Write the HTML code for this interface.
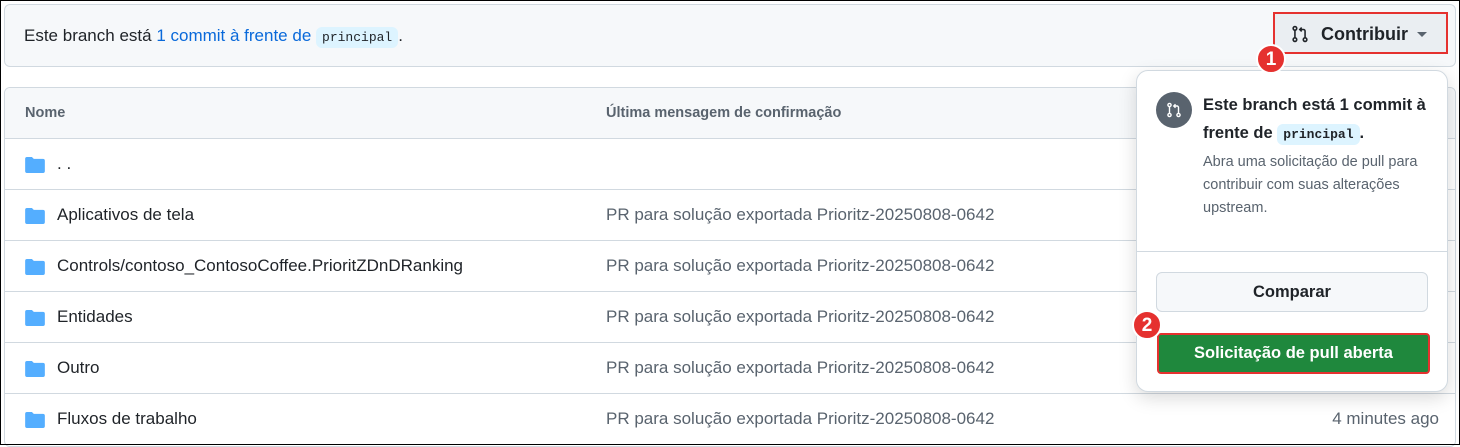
<!DOCTYPE html>
<html><head><meta charset="utf-8"><style>
*{box-sizing:border-box;margin:0;padding:0}
body{width:1460px;height:445px;background:#fff;font-family:"Liberation Sans",sans-serif;position:relative;overflow:hidden;color:#1f2328}
.frame{position:absolute;left:0;top:0;width:1460px;height:445px;border:1px solid #000;z-index:10;pointer-events:none}
.banner{position:absolute;left:4px;top:4px;width:1452px;height:63px;background:#f6f8fa;border:1px solid #d1d9e0;border-radius:6px}
.banner .t{position:absolute;left:19px;top:21px;font-size:17px}
a{color:#0969da;text-decoration:none}
code{font-family:"Liberation Mono",monospace;font-size:13px;background:#ddf4ff;border-radius:6px;padding:3px 6px;color:#1f2328}
.cbtn{position:absolute;left:1273px;top:12px;width:175px;height:42px;background:#eaeef2;border:2px solid #e5312f;font-size:18px;font-weight:bold}
.tbl{position:absolute;left:4px;top:87px;width:1452px;height:360px;border:1px solid #d1d9e0;border-radius:6px;overflow:hidden}
.hdr{height:51px;background:#f6f8fa;border-bottom:1px solid #d1d9e0;font-size:14.5px;font-weight:bold;color:#59636e;position:relative}
.row{height:51px;border-bottom:1px solid #d1d9e0;position:relative;font-size:17px}
.row .n{position:absolute;left:52px;top:15px}
.row .m{position:absolute;left:601px;top:15px;color:#59636e}
.row .d{position:absolute;right:16px;top:15px;color:#59636e}
.fold{position:absolute;left:20px;top:18px;width:20px;height:16px}
.pop{position:absolute;left:1136px;top:70px;width:312px;height:322px;background:#fff;border:1px solid #d1d9e0;border-radius:12px;box-shadow:0 6px 18px rgba(0,0,0,.15)}
.badge{position:absolute;width:30px;height:30px;border-radius:50%;background:#e5312f;color:#fff;font-weight:bold;font-size:19px;text-align:center;line-height:27px;border:2px solid #fff}
</style></head><body>
<div class="frame"></div>
<div class="banner"><div class="t">Este branch está <a>1 commit à frente de</a> <code>principal</code>.</div></div>
<div class="cbtn">
<svg style="position:absolute;left:16px;top:11px" width="18" height="18" viewBox="0 0 16 16" fill="none" stroke="#1f2328" stroke-width="1.4"><circle cx="3.5" cy="3" r="1.6"/><circle cx="3.5" cy="13" r="1.6"/><circle cx="12.5" cy="13" r="1.6"/><path d="M3.5 4.6v6.8M12.5 11.4V5.5a1.5 1.5 0 0 0-1.5-1.5H8M9.5 2.3 7.8 4l1.7 1.7"/></svg>
<span style="position:absolute;left:46px;top:10px">Contribuir</span>
<span style="position:absolute;left:142px;top:18px;border-left:5px solid transparent;border-right:5px solid transparent;border-top:5px solid #59636e"></span>
</div>
<div class="tbl">
<div class="hdr"><span style="position:absolute;left:20px;top:17px">Nome</span><span style="position:absolute;left:601px;top:17px">Última mensagem de confirmação</span></div>
<div class="row"><svg class="fold" viewBox="0 0 16 13"><path d="M0 1.5A1.5 1.5 0 0 1 1.5 0h4l1.5 1.5h7.5A1.5 1.5 0 0 1 16 3v8.5a1.5 1.5 0 0 1-1.5 1.5h-13A1.5 1.5 0 0 1 0 11.5z" fill="#54aeff"/></svg><span class="n">. .</span></div>
<div class="row"><svg class="fold" viewBox="0 0 16 13"><path d="M0 1.5A1.5 1.5 0 0 1 1.5 0h4l1.5 1.5h7.5A1.5 1.5 0 0 1 16 3v8.5a1.5 1.5 0 0 1-1.5 1.5h-13A1.5 1.5 0 0 1 0 11.5z" fill="#54aeff"/></svg><span class="n">Aplicativos de tela</span><span class="m">PR para solução exportada Prioritz-20250808-0642</span></div>
<div class="row"><svg class="fold" viewBox="0 0 16 13"><path d="M0 1.5A1.5 1.5 0 0 1 1.5 0h4l1.5 1.5h7.5A1.5 1.5 0 0 1 16 3v8.5a1.5 1.5 0 0 1-1.5 1.5h-13A1.5 1.5 0 0 1 0 11.5z" fill="#54aeff"/></svg><span class="n">Controls/contoso_ContosoCoffee.PrioritZDnDRanking</span><span class="m">PR para solução exportada Prioritz-20250808-0642</span></div>
<div class="row"><svg class="fold" viewBox="0 0 16 13"><path d="M0 1.5A1.5 1.5 0 0 1 1.5 0h4l1.5 1.5h7.5A1.5 1.5 0 0 1 16 3v8.5a1.5 1.5 0 0 1-1.5 1.5h-13A1.5 1.5 0 0 1 0 11.5z" fill="#54aeff"/></svg><span class="n">Entidades</span><span class="m">PR para solução exportada Prioritz-20250808-0642</span></div>
<div class="row"><svg class="fold" viewBox="0 0 16 13"><path d="M0 1.5A1.5 1.5 0 0 1 1.5 0h4l1.5 1.5h7.5A1.5 1.5 0 0 1 16 3v8.5a1.5 1.5 0 0 1-1.5 1.5h-13A1.5 1.5 0 0 1 0 11.5z" fill="#54aeff"/></svg><span class="n">Outro</span><span class="m">PR para solução exportada Prioritz-20250808-0642</span></div>
<div class="row" style="border:0"><svg class="fold" viewBox="0 0 16 13"><path d="M0 1.5A1.5 1.5 0 0 1 1.5 0h4l1.5 1.5h7.5A1.5 1.5 0 0 1 16 3v8.5a1.5 1.5 0 0 1-1.5 1.5h-13A1.5 1.5 0 0 1 0 11.5z" fill="#54aeff"/></svg><span class="n">Fluxos de trabalho</span><span class="m">PR para solução exportada Prioritz-20250808-0642</span><span class="d">4 minutes ago</span></div>
</div>
<div class="pop">
<div style="position:absolute;left:19px;top:21px;width:36px;height:36px;border-radius:50%;background:#59636e">
<svg style="position:absolute;left:10px;top:10px" width="16" height="16" viewBox="0 0 16 16" fill="none" stroke="#fff" stroke-width="1.4"><circle cx="3.5" cy="3" r="1.6"/><circle cx="3.5" cy="13" r="1.6"/><circle cx="12.5" cy="13" r="1.6"/><path d="M3.5 4.6v6.8M12.5 11.4V5.5a1.5 1.5 0 0 0-1.5-1.5H8M9.5 2.3 7.8 4l1.7 1.7"/></svg></div>
<div style="position:absolute;left:66px;top:20px;width:240px;font-size:16.5px;font-weight:bold;line-height:28px">Este branch está 1 commit à frente de <code>principal</code>.</div>
<div style="position:absolute;left:66px;top:80px;width:240px;font-size:14.5px;line-height:23px;color:#59636e">Abra uma solicitação de pull para contribuir com suas alterações upstream.</div>
<div style="position:absolute;left:0;top:180px;width:310px;border-top:1px solid #d1d9e0"></div>
<div style="position:absolute;left:19px;top:201px;width:272px;height:40px;background:#f6f8fa;border:1px solid #d1d9e0;border-radius:6px;text-align:center;line-height:38px;font-size:16.5px;font-weight:bold">Comparar</div>
<div style="position:absolute;left:20px;top:262px;width:273px;height:41px;background:#1f883d;border:2px solid #e5312f;border-radius:4px;text-align:center;line-height:37px;font-size:16.5px;font-weight:bold;color:#fff">Solicitação de pull aberta</div>
</div>
<div class="badge" style="left:1256px;top:44px">1</div>
<div class="badge" style="left:1132px;top:310px">2</div>
</body></html>
